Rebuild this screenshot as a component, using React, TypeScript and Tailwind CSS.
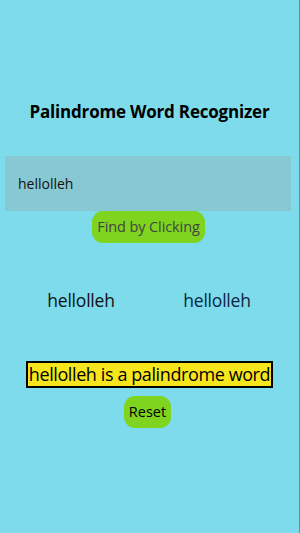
import { useState } from 'react'

export default function App() {
  const [word, setWord] = useState('hellolleh')
  const reversed = word.split('').reverse().join('')
  const isPal = word.length > 0 && word === reversed

  return (
    <div
      className="h-[533px] w-[300px] bg-[#7ddbeb] border-r border-[#6f8a90] flex flex-col items-center"
      style={{ fontFamily: '"Open Sans", "Noto Sans", sans-serif' }}
    >
      <h1 className="mt-[99px] text-[17px] font-bold text-black tracking-[-0.2px]">
        Palindrome Word Recognizer
      </h1>

      <div className="mt-[31px] w-[286px] self-start ml-[5px] h-[55px] bg-[#88c8d2] flex items-center px-[13px]">
        <input
          value={word}
          onChange={(e) => setWord(e.target.value)}
          className="w-full bg-transparent text-[14px] text-[#111] focus:outline-none"
        />
      </div>

      <button className="w-[113px] h-[32px] rounded-[11px] bg-[#7ed41e] text-[14.5px] text-[#444] ml-[-2px] tracking-[-0.1px]">
        Find by Clicking
      </button>

      <div className="mt-[44px] w-full flex">
        <div className="w-[162px] text-center text-[17.5px] text-[#111] tracking-[-0.2px]">{word}</div>
        <div className="w-[110px] text-center text-[17.5px] text-[#0c2540] tracking-[-0.2px]">{reversed}</div>
      </div>

      <div className="mt-[48px] border-2 border-black bg-[#f8e61c] h-[27px] px-[1px] flex items-center text-[18px] text-black leading-none tracking-[-0.4px]">
        {word} {isPal ? 'is a palindrome word' : 'is not a palindrome word'}
      </div>

      <button className="mt-[8px] w-[47px] h-[32px] rounded-[11px] bg-[#7ed41e] text-[14.5px] text-black ml-[-4px]">
        Reset
      </button>
    </div>
  )
}
